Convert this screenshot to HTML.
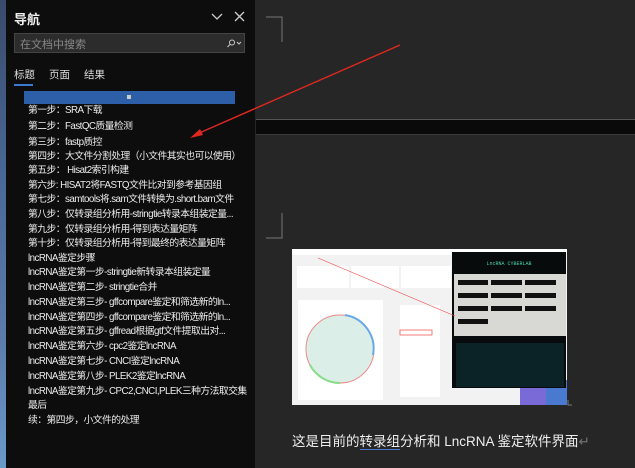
<!DOCTYPE html>
<html><head><meta charset="utf-8">
<style>
*{margin:0;padding:0;box-sizing:border-box}
body{width:635px;height:468px;overflow:hidden;background:#262626;position:relative;font-family:"Liberation Sans","Noto Sans CJK SC",sans-serif}
.desk{position:absolute;left:0;top:0;width:6px;height:468px;background:linear-gradient(#3a4a6a,#4a6a9a 40%,#5a7aa8 70%,#6a9ac8)}
.nav{position:absolute;left:6px;top:0;width:249px;height:468px;background:#0d0d0d;color:#e6e6e6}
.title{position:absolute;left:8px;top:9px;font-size:13px;font-weight:bold;color:#f0f0f0}
.search{position:absolute;left:8px;top:33px;width:231px;height:20px;background:#2c2c2c;border:1px solid #444;font-size:11px;color:#888;padding:2px 5px}
.tabs{position:absolute;top:67px;font-size:10.5px;color:#ddd}
.ul{position:absolute;left:8px;top:84px;width:19px;height:2px;background:#3b78d0}
.bar{position:absolute;left:18px;top:91px;width:211px;height:13px;background:#2d5ea8}
.item{position:absolute;left:22px;font-size:9.8px;line-height:12px;color:#ececec;white-space:nowrap;letter-spacing:-0.55px}
.doc{position:absolute;left:256px;top:0;width:379px;height:468px;background:#262626}
.band{position:absolute;left:256px;top:119px;width:379px;height:16px;background:#0a0a0a;border-top:1px solid #555;border-bottom:1px solid #3a3a3a}
.cap{position:absolute;left:292px;top:430px;font-size:13.5px;color:#eee;white-space:nowrap}
</style></head><body>
<div class="desk"></div>
<div class="nav">
<div class="title">导航</div>
<svg style="position:absolute;left:205px;top:11px" width="36" height="12"><path d="M1 3l5 5 5-5" stroke="#ccc" fill="none" stroke-width="1.3"/><path d="M24 1l9 9M33 1l-9 9" stroke="#ccc" stroke-width="1.3"/></svg>
<div class="search">在文档中搜索
<svg style="position:absolute;right:2px;top:5px" width="16" height="9"><circle cx="6" cy="3.5" r="2.5" stroke="#ccc" fill="none"/><path d="M4 5.5l-2.5 2.5M11 3l2 2 2-2" stroke="#ccc" fill="none"/></svg></div>
<div class="tabs" style="left:8px">标题</div><div class="tabs" style="left:43px">页面</div><div class="tabs" style="left:78px">结果</div>
<div class="ul"></div>
<div class="bar"><div style="position:absolute;left:103px;top:4px;width:4px;height:4px;background:#ccc"></div></div>
<div class="item" style="top:105px">第一步：SRA下载</div>
<div class="item" style="top:121px">第二步：FastQC质量检测</div>
<div class="item" style="top:137px">第三步：fastp质控</div>
<div class="item" style="top:151px">第四步：大文件分割处理（小文件其实也可以使用）</div>
<div class="item" style="top:165px">第五步：&nbsp;Hisat2索引构建</div>
<div class="item" style="top:180px">第六步: HISAT2将FASTQ文件比对到参考基因组</div>
<div class="item" style="top:194px">第七步：samtools将.sam文件转换为.short.bam文件</div>
<div class="item" style="top:209px">第八步：仅转录组分析用-stringtie转录本组装定量...</div>
<div class="item" style="top:224px">第九步：仅转录组分析用-得到表达量矩阵</div>
<div class="item" style="top:238px">第十步：仅转录组分析用-得到最终的表达量矩阵</div>
<div class="item" style="top:253px">lncRNA鉴定步骤</div>
<div class="item" style="top:267px">lncRNA鉴定第一步-stringtie新转录本组装定量</div>
<div class="item" style="top:282px">lncRNA鉴定第二步- stringtie合并</div>
<div class="item" style="top:297px">lncRNA鉴定第三步- gffcompare鉴定和筛选新的ln...</div>
<div class="item" style="top:312px">lncRNA鉴定第四步- gffcompare鉴定和筛选新的ln...</div>
<div class="item" style="top:326px">lncRNA鉴定第五步- gffread根据gtf文件提取出对...</div>
<div class="item" style="top:341px">lncRNA鉴定第六步- cpc2鉴定lncRNA</div>
<div class="item" style="top:356px">lncRNA鉴定第七步- CNCI鉴定lncRNA</div>
<div class="item" style="top:371px">lncRNA鉴定第八步- PLEK2鉴定lncRNA</div>
<div class="item" style="top:386px">lncRNA鉴定第九步- CPC2,CNCI,PLEK三种方法取交集</div>
<div class="item" style="top:400px">最后</div>
<div class="item" style="top:415px">续：第四步，小文件的处理</div>
</div>
<div class="doc"></div>
<div class="band"></div>
<svg style="position:absolute;left:0;top:0" width="635" height="468">
<path d="M266 17h16v25" stroke="#777" fill="none"/>
<path d="M266 238h16v-25" stroke="#777" fill="none"/>
<rect x="292" y="249" width="275" height="156" fill="#f2f2f2"/>
<rect x="292" y="249" width="275" height="6" fill="#fff"/>
<rect x="297" y="266" width="52" height="22" fill="#fff"/><rect x="351" y="266" width="48" height="22" fill="#fff"/><rect x="401" y="266" width="50" height="22" fill="#fff"/>
<rect x="298" y="300" width="85" height="100" fill="#fff"/>
<circle cx="340" cy="349" r="34" fill="#dceee8" stroke="#e88" stroke-width="1"/>
<path d="M345 315a34 34 0 0 1 28 40" stroke="#6aa8e8" stroke-width="2" fill="none"/>
<path d="M310 365a34 34 0 0 0 30 18" stroke="#8d8" stroke-width="2" fill="none"/>
<rect x="400" y="305" width="40" height="92" fill="#fff"/>
<rect x="400" y="330" width="32" height="5" fill="none" stroke="#e44" stroke-width="0.7"/>
<rect x="520" y="380" width="47" height="25" fill="#7a6ad8"/>
<rect x="546" y="380" width="21" height="25" fill="#4a7ad0"/>
<rect x="452" y="252" width="114" height="136" fill="#070b0b"/>
<text x="509" y="265" font-size="5" fill="#4fd6b0" text-anchor="middle" font-family="Liberation Mono">LncRNA CYBERLAB</text>
<rect x="454" y="274" width="112" height="62" fill="#d8d8d4"/>
<g fill="#111"><rect x="458" y="280" width="30" height="5"/><rect x="491" y="280" width="31" height="5"/><rect x="525" y="280" width="31" height="5"/>
<rect x="458" y="293" width="30" height="5"/><rect x="491" y="293" width="31" height="5"/><rect x="525" y="293" width="31" height="5"/>
<rect x="458" y="306" width="30" height="5"/><rect x="491" y="306" width="31" height="5"/><rect x="525" y="306" width="31" height="5"/>
<rect x="458" y="319" width="30" height="5"/></g>
<rect x="456" y="343" width="108" height="44" fill="#0b2226"/>
<line x1="318" y1="258" x2="455" y2="316" stroke="#e44" stroke-width="0.6"/>
<path d="M572 405h-4v-5" stroke="#777" fill="none"/>
<line x1="400" y1="45" x2="197" y2="134" stroke="#e0281e" stroke-width="1.4"/>
<path d="M190 138l10-9 3 6z" fill="#e0281e"/>
</svg>
<div class="cap">这是目前的<span style="border-bottom:1px solid #4a7ad0">转录组</span>分析和 LncRNA 鉴定软件界面<span style="color:#777">↵</span></div>
</body></html>
